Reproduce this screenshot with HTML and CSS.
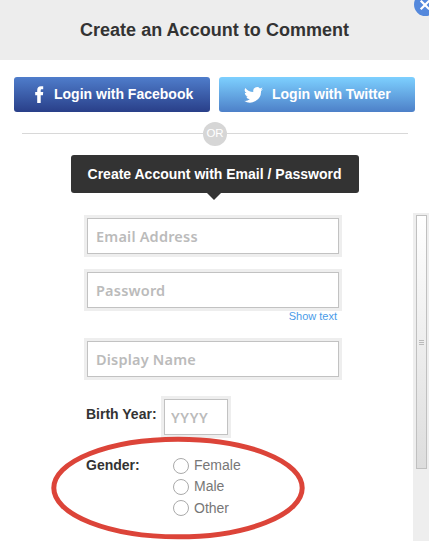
FILE: index.html
```html
<!DOCTYPE html>
<html lang="en">
<head>
<meta charset="utf-8">
<title>Create an Account to Comment</title>
<link rel="stylesheet" href="styles.css">
</head>
<body>
<header class="header">
  <h1>Create an Account to Comment</h1>
  <button class="close" aria-label="Close"><svg width="22" height="22" viewBox="0 0 22 22"><path d="M6.7 6.7l8.6 8.6M15.3 6.7l-8.6 8.6" stroke="#fff" stroke-width="2.2"/></svg></button>
</header>
<div class="social">
  <button class="login facebook">
    <svg width="9" height="17" viewBox="0 0 9 17"><path d="M2.2 17V9.2H.2V6h2V4.2C2.200 1.400 3.600.2 5.900.2h2.300v3.100H6.900C6 3.300 5.700 3.700 5.700 4.600V6h2.500l-.3 3.200H5.700V17z" fill="#fff"/></svg>
    <span>Login with Facebook</span>
  </button>
  <button class="login twitter">
    <svg width="19" height="16" viewBox="0 0 24 20"><path d="M24 2.400a10 10 0 0 1-2.800.8A4.900 4.900 0 0 0 23.300.5a10 10 0 0 1-3.100 1.200 4.900 4.900 0 0 0-8.400 4.500A14 14 0 0 1 1.700 1a4.900 4.900 0 0 0 1.500 6.600A4.900 4.900 0 0 1 1 7c0 2.400 1.700 4.400 3.900 4.900a5 5 0 0 1-2.200.1 4.900 4.900 0 0 0 4.600 3.400A9.900 9.900 0 0 1 0 17.400a14 14 0 0 0 21.500-12.400A10 10 0 0 0 24 2.400z" fill="#fff"/></svg>
    <span>Login with Twitter</span>
  </button>
</div>
<div class="divider"><span>OR</span></div>
<h2 class="banner"><span>Create Account with Email / Password</span></h2>
<main class="content">
  <form class="form">
    <input class="field" type="text" placeholder="Email Address">
    <input class="field" type="text" placeholder="Password">
    <a class="show">Show text</a>
    <input class="field" type="text" placeholder="Display Name">
    <div class="birth"><label for="year">Birth Year:</label><input id="year" class="field year" type="text" placeholder="YYYY"></div>
    <div class="gender">
      <strong>Gender:</strong>
      <div class="options">
        <label><input type="radio" name="gender">Female</label>
        <label><input type="radio" name="gender">Male</label>
        <label><input type="radio" name="gender">Other</label>
      </div>
      <svg class="ring" width="256" height="104" viewBox="0 0 256 104"><ellipse cx="128" cy="52" rx="124.200" ry="48.800" fill="none" stroke="#dc4439" stroke-width="5"/></svg>
    </div>
  </form>
  <div class="track"><div class="thumb"><i></i><i></i><i></i></div></div>
</main>
</body>
</html>
```
FILE: styles.css
```css
* { box-sizing: border-box; }
body {
  margin: 0;
  height: 541px;
  overflow: hidden;
  background: #fff;
  color: #333;
  font-family: "Liberation Sans", Arial, sans-serif;
}
button { border: 0; padding: 0; font-family: inherit; }
.header {
  position: relative;
  height: 60px;
  background: #ededed;
  text-align: center;
}
h1 { margin: 0; font-size: 18px; line-height: 60px; letter-spacing: 0.03px; }
.close {
  position: absolute;
  top: -7px;
  left: 414px;
  width: 23px;
  height: 23px;
  border-radius: 50%;
  background: #5488dc;
}
.close svg { display: block; }
.social { display: flex; gap: 9px; padding: 17px 14px 0; }
.login {
  display: flex;
  align-items: center;
  width: 196px;
  height: 35px;
  border-radius: 3px;
  color: #fff;
  font-size: 14px;
  font-weight: bold;
  white-space: nowrap;
}
.login span { padding-bottom: 2px; }
.facebook { padding-left: 21px; gap: 10px; background: linear-gradient(#4f7dcb, #293f89); }
.twitter { padding-left: 25px; gap: 9px; background: linear-gradient(#7dd0ff, #4d80c8); }
.divider {
  display: flex;
  align-items: center;
  height: 24px;
  margin: 10px 21px 0 22px;
}
.divider::before, .divider::after { content: ""; flex: 1; height: 1px; margin-bottom: 1px; background: #d8d8d8; }
.divider span {
  width: 24px;
  height: 24px;
  border-radius: 50%;
  background: #d6d6d6;
  color: #fff;
  font-size: 11.500px;
  line-height: 23px;
  text-align: center;
}
.banner {
  position: relative;
  width: 288px;
  height: 38px;
  margin: 9px 0 0 71px;
  padding-right: 1px;
  border-radius: 3px;
  background: #333;
  color: #fff;
  font-size: 14px;
  line-height: 38px;
  text-align: center;
  white-space: nowrap;
}
.banner::after {
  content: "";
  position: absolute;
  top: 38px;
  left: 136px;
  border: 7px solid transparent;
  border-top-color: #333;
  border-bottom: 0;
}
.content { display: flex; justify-content: space-between; height: 328px; margin-top: 20px; }
.form { width: 258px; margin: 2px 0 0 84px; }
.field {
  display: block;
  width: 252px;
  height: 36px;
  margin: 3px 3px 18px;
  padding: 0 8px 1px;
  border: 1px solid #c2c2c2;
  outline: 3px solid #eee;
  border-radius: 0;
  background: #fff;
  font: 600 14.500px "Noto Sans", sans-serif;
  letter-spacing: 0.2px;
}
.field::placeholder { color: #bbb; opacity: 1; }
.show {
  display: block;
  height: 12px;
  margin: -16px 5px 19px 0;
  color: #4a9be8;
  font-size: 11px;
  line-height: 12px;
  text-align: right;
}
.birth { display: flex; margin-top: 19px; }
.birth label { width: 77px; padding: 10px 0 0 2px; font-size: 14px; font-weight: bold; line-height: 16px; }
.year { width: 64px; margin: 3px; padding: 0 5px 1px 6px; letter-spacing: 0.6px; }
.gender {
  position: relative;
  display: flex;
  padding: 17px 0 0 2px;
  font-size: 14px;
  line-height: 21.500px;
}
.gender strong { width: 87px; }
.options { display: flex; flex-direction: column; color: #777; }
.options label { display: flex; align-items: center; gap: 5px; height: 21.300px; }
.options input {
  appearance: none;
  width: 16px;
  height: 16px;
  margin: 0;
  border: 1px solid #aaa;
  border-radius: 50%;
  background: #fff;
}
.ring { position: absolute; top: -2px; left: -34px; pointer-events: none; }
.track { width: 16px; padding: 2px 2px 0 3px; background: #eee; }
.thumb {
  display: flex;
  flex-direction: column;
  align-items: center;
  justify-content: center;
  gap: 1px;
  height: 254px;
  border: 1px solid #c0c0c0;
  background: linear-gradient(#fff, #ddd);
}
.thumb i { width: 5px; height: 1px; background: #bbb; }
```
